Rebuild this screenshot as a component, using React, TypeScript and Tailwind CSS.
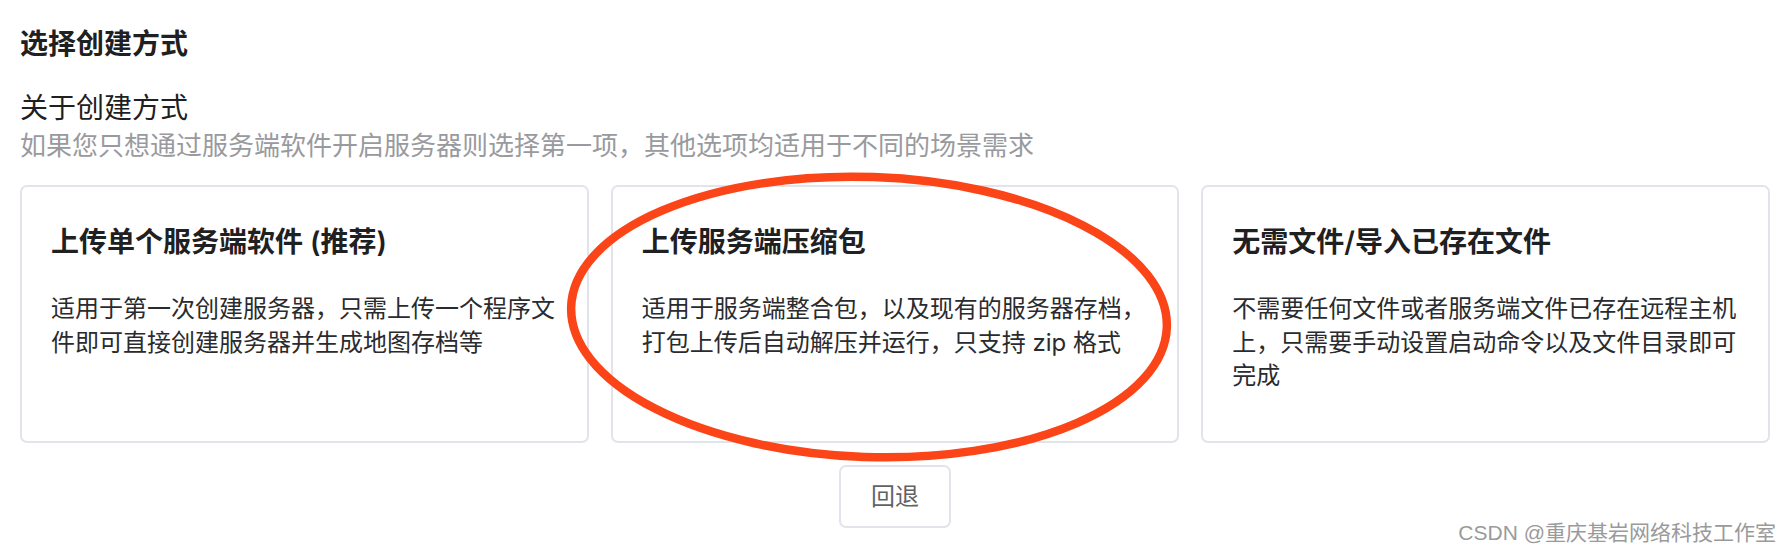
import React from "react";

const cards = [
  {
    title: "上传单个服务端软件 (推荐)",
    text: "适用于第一次创建服务器，只需上传一个程序文件即可直接创建服务器并生成地图存档等",
  },
  {
    title: "上传服务端压缩包",
    text: "适用于服务端整合包，以及现有的服务器存档，打包上传后自动解压并运行，只支持 zip 格式",
  },
  {
    title: "无需文件/导入已存在文件",
    text: "不需要任何文件或者服务端文件已存在远程主机上，只需要手动设置启动命令以及文件目录即可完成",
  },
];

export default function App() {
  return (
    <div
      className="relative h-[552px] w-full overflow-hidden bg-white px-5 pt-6"
      style={{ fontFamily: 'Inter, "Noto Sans CJK SC", sans-serif' }}
    >
      <h1 className="text-[28px] leading-[40px] font-semibold text-[#1f2021]">选择创建方式</h1>
      <div className="mt-[28px] text-[28px] leading-[32px] text-[#1f2021]">关于创建方式</div>
      <div className="mt-[8px] text-[26px] leading-[28px] text-[#999a9e]">
        如果您只想通过服务端软件开启服务器则选择第一项，其他选项均适用于不同的场景需求
      </div>

      <div className="mt-[25px] grid grid-cols-3 gap-[22px]">
        {cards.map((c) => (
          <div
            key={c.title}
            className="h-[258px] rounded-[7px] border-2 border-[#e1e4ea] bg-white px-[29px] pt-[35px]"
          >
            <div className="text-[28px] leading-[40px] font-semibold text-[#1f2021]">{c.title}</div>
            <div className="mt-[30px] text-[24px] leading-[33.5px] text-[#2a2b2e]">{c.text}</div>
          </div>
        ))}
      </div>

      <div className="mt-[22px] flex justify-center">
        <button className="h-[63px] w-[112px] rounded-[7px] border-2 border-[#e1e4ea] bg-white text-[24px] text-[#606266]">
          回退
        </button>
      </div>

      <svg
        className="pointer-events-none absolute inset-0"
        width="1790"
        height="552"
        viewBox="0 0 1790 552"
      >
        <ellipse
          cx="869"
          cy="317"
          rx="298"
          ry="140"
          fill="none"
          stroke="#fb4417"
          strokeWidth="8.5"
          transform="rotate(2 869 317)"
        />
      </svg>

      <div
        className="absolute bottom-[8px] right-[14px] text-[21px] leading-[22px] text-[#9a9a9a]"
        style={{ fontFamily: '"Liberation Sans", "Noto Sans CJK SC", sans-serif' }}
      >
        CSDN @重庆基岩网络科技工作室
      </div>
    </div>
  );
}
